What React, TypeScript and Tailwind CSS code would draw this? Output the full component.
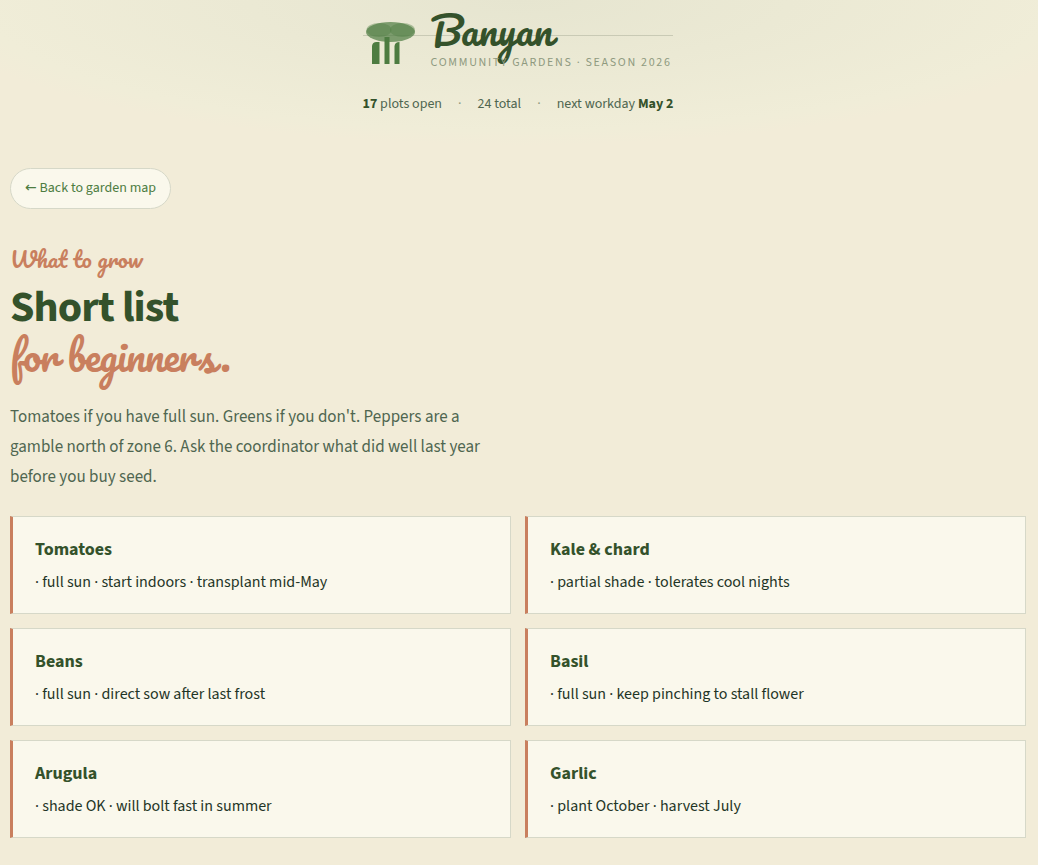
const crops = [
  { name: 'Tomatoes', notes: '· full sun · start indoors · transplant mid-May' },
  { name: 'Kale & chard', notes: '· partial shade · tolerates cool nights' },
  { name: 'Beans', notes: '· full sun · direct sow after last frost' },
  { name: 'Basil', notes: '· full sun · keep pinching to stall flower' },
  { name: 'Arugula', notes: '· shade OK · will bolt fast in summer' },
  { name: 'Garlic', notes: '· plant October · harvest July' },
];

function BanyanLogo() {
  return (
    <svg className="relative h-14 w-14 shrink-0" viewBox="0 0 56 56" aria-hidden="true">
      <path d="M9 52V34Q9.500 30 13.500 30H16.500V52Z" fill="#4d7c41" />
      <path d="M21.500 25H26.500V52H21.500Z" fill="#4d7c41" />
      <path d="M31.500 52V34Q32 30 36.500 30V52Z" fill="#4d7c41" />
      <ellipse cx="27.500" cy="20" rx="24.500" ry="10" fill="#4d7c41" fillOpacity="0.7" />
      <ellipse cx="16" cy="18" rx="12.500" ry="7" fill="#4d7c41" fillOpacity="0.4" />
      <ellipse cx="39.500" cy="18" rx="12.500" ry="7" fill="#4d7c41" fillOpacity="0.4" />
    </svg>
  );
}

function Header() {
  return (
    <header className="mx-auto w-fit">
      <div className="relative flex items-start gap-3">
        <div className="absolute inset-x-0 top-[23px] h-px bg-[#c9cab5]" />
        <BanyanLogo />
        <div className="relative">
          <div className="pb-1.5 font-['Pacifico',cursive] text-[39px] leading-[36px] tracking-[-0.01em] text-[#34522b]">
            Banyan
          </div>
          <div className="text-xs leading-[18px] tracking-[0.14em] text-[#8f9a80] uppercase">
            Community Gardens · Season 2026
          </div>
        </div>
      </div>
      <div className="mt-[22px] flex gap-4 text-sm leading-5 text-[#4f6650]">
        <span><b className="text-[#34522b]">17</b> plots open</span>
        <span className="text-[#8f9a80]">·</span>
        <span>24 total</span>
        <span className="text-[#8f9a80]">·</span>
        <span>next workday <b className="text-[#34522b]">May 2</b></span>
      </div>
    </header>
  );
}

export default function App() {
  return (
    <div className="min-h-screen bg-[#f2ecd8] bg-[radial-gradient(ellipse_600px_145px_at_50%_0,#e6e5d0,#f0edd8_90%,#f2ecd800)] bg-no-repeat pt-3 pr-3 pb-[26px] pl-[10px] font-['Source_Sans_3','Noto_Sans_CJK_SC',sans-serif] text-[#1f3526]">
      <Header />
      <main>
        <a
          href="#map"
          className="mt-[54px] inline-block rounded-full border border-[#d6d8c8] bg-[#faf8ec] px-[14px] pt-[9px] pb-[10px] text-sm leading-5 text-[#4d7c41]"
        >
          <span className="font-['DejaVu_Sans',sans-serif] leading-none">←</span> Back to garden map
        </a>
        <p className="mt-8 font-['Pacifico',cursive] text-[22px] leading-9 text-[#c97f5e]">
          What to grow
        </p>
        <h1 className="mt-1.5 text-[44px] leading-[50px] font-bold tracking-[-0.02em] text-[#34522b]">
          Short list
          <span className="block font-['Pacifico',cursive] text-[40px] leading-[44px] font-normal tracking-[-1px] text-[#c97f5e]">
            for beginners.
          </span>
        </h1>
        <p className="mt-[25px] max-w-[490px] text-[17px] leading-[30px] text-[#4f6650]">
          Tomatoes if you have full sun. Greens if you don't. Peppers are a gamble north of zone 6.
          Ask the coordinator what did well last year before you buy seed.
        </p>
        <div className="mt-6 grid grid-cols-2 gap-[14px]">
          {crops.map((crop) => (
            <article
              key={crop.name}
              className="border border-l-3 border-[#d6d8c8] border-l-[#c97f5e] bg-[#faf8ec] px-[22px] pt-5 pb-4"
            >
              <h2 className="text-lg leading-[26px] font-bold text-[#34522b]">{crop.name}</h2>
              <p className="mt-1 text-base leading-[30px]">{crop.notes}</p>
            </article>
          ))}
        </div>
      </main>
    </div>
  );
}
